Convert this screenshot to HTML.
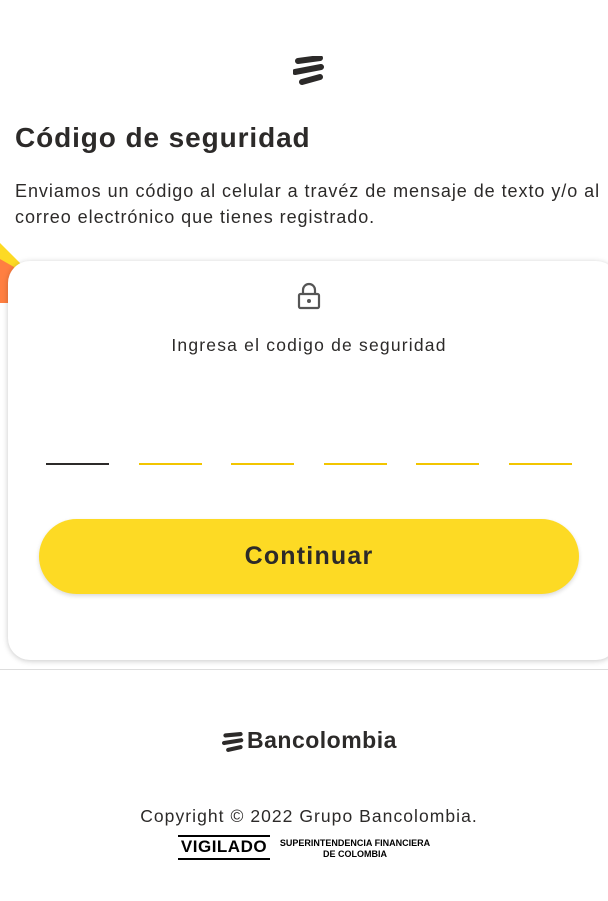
<!DOCTYPE html>
<html><head><meta charset="utf-8"><style>
*{margin:0;padding:0;box-sizing:border-box}
body{width:608px;height:901px;background:#fff;font-family:"Liberation Sans",sans-serif;color:#2c2a29;position:relative;overflow:hidden}
.abs{position:absolute}
h1{position:absolute;left:15px;top:122px;font-size:28px;font-weight:bold;color:#2c2a29;letter-spacing:0.9px}
.p{left:15px;top:178px;font-size:18px;line-height:26px;color:#2c2a29;width:596px;letter-spacing:0.95px}
.card{left:8px;top:261px;width:610px;height:399px;background:#fff;border-radius:22px;box-shadow:0 1px 6px rgba(0,0,0,.22)}
.line{top:463px;width:63px;height:2px;background:#f2c500}
.btn{left:39px;top:519px;width:540px;height:75px;background:#fdda24;border-radius:38px;box-shadow:0 2px 4px rgba(0,0,0,.15);text-align:center;line-height:75px;font-size:25px;font-weight:bold;color:#2c2a29;letter-spacing:1.2px}
</style></head><body>
<svg class="abs" style="left:293px;top:56px" width="32" height="32" viewBox="0 0 32 32">
<path d="M5 5 L27 2 M2 16 L28 11 M9 26 L27 21" stroke="#2c2a29" stroke-width="6" stroke-linecap="round" fill="none"/>
</svg>
<h1>Código de seguridad</h1>
<div class="abs p">Enviamos un código al celular a travéz de mensaje de texto y/o al correo electrónico que tienes registrado.</div>
<svg class="abs" style="left:0;top:243px" width="30" height="60"><polygon points="0,0 22,22 0,44" fill="#fdda24"/><polygon points="0,16 14,24 8,60 0,60" fill="#ff7f41"/></svg>
<div class="abs card"></div>
<svg class="abs" style="left:297px;top:282px" width="24" height="28" viewBox="0 0 24 28">
<path d="M6 12 V8 a6 6 0 0 1 12 0 V12" stroke="#555" stroke-width="2.2" fill="none"/>
<rect x="2" y="12" width="20" height="14" rx="1.5" stroke="#555" stroke-width="2.2" fill="none"/>
<circle cx="12" cy="19" r="2" fill="#555"/></svg>
<div class="abs" style="left:0;width:618px;top:335px;text-align:center;font-size:17.5px;color:#2c2a29;letter-spacing:1.2px">Ingresa el codigo de seguridad</div>
<div class="abs line" style="left:46px;background:#2c2a29"></div>
<div class="abs line" style="left:139px"></div>
<div class="abs line" style="left:231px"></div>
<div class="abs line" style="left:324px"></div>
<div class="abs line" style="left:416px"></div>
<div class="abs line" style="left:509px"></div>
<div class="abs btn">Continuar</div>
<div class="abs" style="left:0;top:669px;width:608px;height:1px;background:#ddd"></div>
<svg class="abs" style="left:222px;top:732px" width="22" height="22" viewBox="0 0 32 32">
<path d="M5 5 L27 3 M3 16 L28 12 M9 26 L27 22" stroke="#2c2a29" stroke-width="6" stroke-linecap="round" fill="none"/></svg>
<div class="abs" style="left:247px;top:727px;font-size:23px;font-weight:bold;color:#2c2a29;letter-spacing:0.5px">Bancolombia</div>
<div class="abs" style="left:0;width:618px;top:806px;text-align:center;font-size:17.5px;color:#2c2a29;letter-spacing:1.05px">Copyright © 2022 Grupo Bancolombia.</div>
<div class="abs" style="left:178px;top:835px;width:92px;border-top:2px solid #000;border-bottom:2px solid #000;font-size:17px;font-weight:bold;color:#000;text-align:center;line-height:20px;height:25px;letter-spacing:0.5px">VIGILADO</div>
<div class="abs" style="left:272px;top:838px;width:166px;text-align:center;font-size:9px;font-weight:bold;color:#000;line-height:11px">SUPERINTENDENCIA FINANCIERA<br>DE COLOMBIA</div>
</body></html>
